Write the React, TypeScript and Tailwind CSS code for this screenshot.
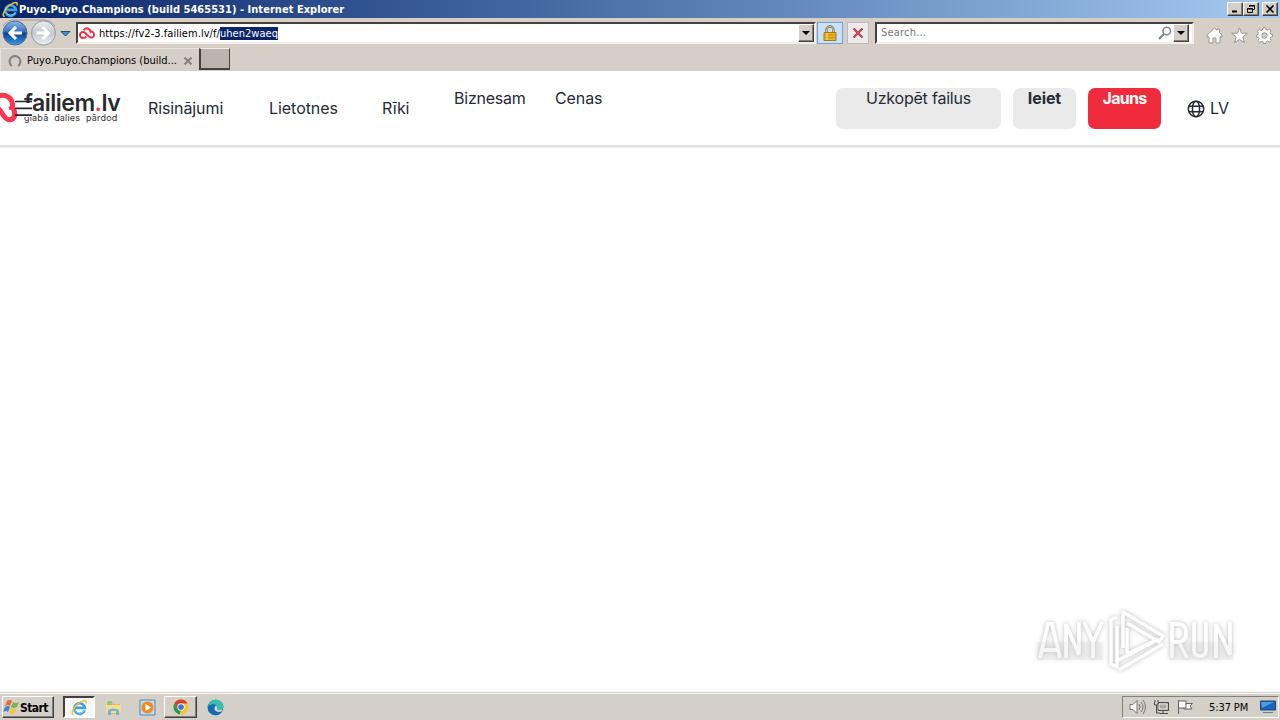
import type { ReactNode } from "react";

type LinkItem = { label: string; className: string };

const navLinks: LinkItem[] = [
  { label: "Risinājumi", className: "ml-[148px] w-[121px] pt-[27px] tracking-[-0.1px]" },
  { label: "Lietotnes", className: "w-[113px] pt-[27px] tracking-[-0.05px]" },
  { label: "Rīki", className: "w-[72px] pt-[27px] tracking-[-0.25px]" },
  { label: "Biznesam", className: "w-[101px] pt-[17px] tracking-[-0.22px]" },
  { label: "Cenas", className: "w-[60px] pt-[17px] tracking-[-0.1px]" }
];

const raised = "border border-t-white border-l-white border-r-[#404040] border-b-[#404040] bg-[#d4d0c8] shadow-[inset_-1px_-1px_0_#808080]";
const sunken = "border-2 border-t-[#45423d] border-l-[#45423d] border-r-[#f2efeb] border-b-[#f2efeb] bg-white";

function IeLogo({ size }: { size: number }) {
  return (
    <svg width={size} height={size} viewBox="0 0 18 18" fill="none">
      <path d="M14.5 12.1A5.7 5.7 0 1 1 14.8 9.4H5" stroke="#3fa2e4" strokeWidth="2.7" />
      <path d="M14.2 12A5.7 5.7 0 0 1 4 11.6" stroke="#83d8f7" strokeWidth="1" />
      <path d="M2.9 16.5C-.9 16 2.3 9.2 7.7 4.8 12.7.8 17.8.1 15.7 4.8" stroke="#f3c433" strokeWidth="1.6" />
    </svg>
  );
}

function DropButton() {
  return (
    <span className={`flex h-[18px] w-4 shrink-0 items-center justify-center ${raised}`}>
      <svg width="8" height="4" viewBox="0 0 8 4"><path d="M0 0h8L4 4Z" fill="#000" /></svg>
    </span>
  );
}

function WindowButton({ children }: { children: ReactNode }) {
  return (
    <button className={`flex h-[14px] w-4 items-center justify-center ${raised}`}>
      <svg width="10" height="10" viewBox="0 0 10 10" fill="none" stroke="#000">{children}</svg>
    </button>
  );
}

function TitleBar() {
  return (
    <div className="flex h-[18px] items-center bg-linear-to-r from-[#0a246a] to-[#a6caf0] pl-[2px] pr-[2px]">
      <IeLogo size={17} />
      <span className="flex-1 whitespace-nowrap pt-px font-[DejaVu_Sans_Condensed,DejaVu_Sans,sans-serif] text-[11px] font-bold leading-[17px] tracking-[0.035px] text-white">
        Puyo.Puyo.Champions (build 5465531) - Internet Explorer
      </span>
      <WindowButton><path d="M2 7.5h5" strokeWidth="2" /></WindowButton>
      <WindowButton><path d="M3.5 3V1.5h5v4H7M3 2h6M1.5 4.5h5v4h-5ZM1 5h6" /></WindowButton>
      <span className="w-[3px]" />
      <WindowButton><path d="m1.5 1.5 7 7m0-7-7 7" strokeWidth="1.6" /></WindowButton>
    </div>
  );
}

function Toolbar() {
  return (
    <div className="flex h-[30px] items-start bg-[#d5cfc8]">
      <svg className="shrink-0" width="76" height="30" viewBox="0 0 76 30" fill="none">
        <defs>
          <linearGradient id="back" x2="0" y2="1">
            <stop stopColor="#8fb7e8" /><stop offset=".45" stopColor="#3670bd" /><stop offset=".5" stopColor="#123f91" /><stop offset="1" stopColor="#369be5" />
          </linearGradient>
          <linearGradient id="forward" x2="0" y2="1">
            <stop stopColor="#edf0f2" /><stop offset=".5" stopColor="#c2c8ce" /><stop offset="1" stopColor="#edf2f5" />
          </linearGradient>
        </defs>
        <path d="M3 8Q8 1 15 2h28q8 0 12 6" stroke="#a09d99" />
        <circle cx="15" cy="15" r="12" fill="url(#back)" stroke="#506d99" />
        <circle cx="43.5" cy="15" r="12" fill="url(#forward)" stroke="#939aa2" />
        <path d="M22 15H10m6-6-6 6 6 6" stroke="white" strokeWidth="3" />
        <path d="M36.5 15h12m-6-6 6 6-6 6" stroke="white" strokeWidth="3" />
        <path d="M61 13.5h9L65.5 18Z" fill="#3298ce" stroke="#254b6e" />
      </svg>
      <div className={`mt-1 flex h-[22px] w-[740px] shrink-0 items-center ${sunken}`}>
        <svg className="ml-px" width="16" height="13" viewBox="0 0 16 13" fill="none" stroke="#ee344c" strokeWidth="2">
          <path d="M7.5 9.5Q6 11 4 11a3 3 0 1 1 1.5-5.6L10 9.5c2 2 5 1 5-1.6C15 5 13 4 11.5 5 11 1 6 0 4.7 3.4" />
        </svg>
        <span className="ml-[4px] flex-1 whitespace-nowrap pt-px font-[DejaVu_Sans_Condensed,DejaVu_Sans,sans-serif] text-[11px] leading-[14px] tracking-[0.05px] text-black">
          https://fv2-3.failiem.lv/f/<span className="inline-block h-[13px] bg-[#0a246a] leading-[13px] text-white">uhen2waeq</span>
        </span>
        <DropButton />
      </div>
      <span className="ml-px mt-1 flex h-[22px] w-[26px] shrink-0 items-center justify-center border border-[#72a2dc] bg-[#c9e1fb]">
        <svg width="14" height="17" viewBox="0 0 14 17" fill="none">
          <path d="M3.5 8V5a3.5 3.5 0 0 1 7 0v3" stroke="#857243" strokeWidth="2.4" />
          <path d="M3.5 8V5a3.5 3.5 0 0 1 7 0v3" stroke="#d4c38b" />
          <path d="M1 7.5h12v8H1Z" fill="#e8b52b" stroke="#a97811" />
          <path d="M1 10h12M1 12.7h12" stroke="#c98b10" />
          <path d="M4 8v7" stroke="#ffe27a" />
        </svg>
      </span>
      <span className="ml-1 mt-1 flex h-[22px] w-[22px] shrink-0 items-center justify-center border border-[#bdb9bb] bg-[#eeeaec]">
        <svg width="12" height="12" viewBox="0 0 12 12"><path d="m1.5 1.5 9 9m0-9-9 9" stroke="#8c4652" strokeWidth="2.2" /><path d="m2 2 8 8m0-8-8 8" stroke="#dc4552" strokeWidth="1.2" /></svg>
      </span>
      <div className={`ml-[6px] mt-1 flex h-[22px] w-[319px] shrink-0 items-center pr-[3px] ${sunken}`}>
        <span className="ml-[4px] flex-1 pt-px font-[DejaVu_Sans_Condensed,DejaVu_Sans,sans-serif] text-[11px] tracking-[0.2px] text-[#767676]">Search...</span>
        <svg className="mr-px" width="14" height="14" viewBox="0 0 14 14" fill="none" stroke="#85878c"><circle cx="8.7" cy="5" r="3.8" strokeWidth="1.5" /><path d="m6 8-5 5" strokeWidth="2.4" /></svg>
        <DropButton />
      </div>
      <div className="ml-[12px] flex h-[30px] items-center gap-[8px] pt-[4px]">
        <svg width="17" height="17" viewBox="0 0 17 17" fill="white" stroke="#98948f"><path d="m1 8 7.5-7L11 3.3V2h2.5v3.6L16 8v2h-2v6h-4v-5H7v5H3v-6H1Z" /></svg>
        <svg width="17" height="17" viewBox="0 0 17 17" fill="white" stroke="#98948f"><path d="m8.5.8 2 5.3 5.8.2-4.5 3.6 1.5 5.7-4.8-3.2-4.8 3.2 1.5-5.7L.7 6.3l5.8-.2Z" /></svg>
        <svg width="17" height="17" viewBox="0 0 17 17" fill="white" stroke="#98948f">
          <path d="m7 .8-.5 2-1.3.6-2-1-1.9 2 1.2 1.8-.5 1.3L.5 8v2l2 .5.6 1.3-1 1.9 1.7 1.6 1.9-1 1.3.5.5 1.7h2.3l.5-1.8 1.4-.6 1.8 1 1.7-1.7-1.1-1.8.5-1.3 2-.5V7.5l-2-.5-.5-1.3 1-1.9-1.8-1.6-1.8 1-1.3-.5-.6-1.9Z" />
          <circle cx="8.5" cy="8.5" r="2.7" fill="#d5cfc8" />
        </svg>
      </div>
    </div>
  );
}

function TabStrip() {
  return (
    <div className="flex h-[23px] bg-[#d5cfc8]">
      <div className="flex w-[199px] items-center border-t border-l border-[#e8e4e0] pl-[7px] pt-px">
        <svg width="14" height="14" viewBox="0 0 13 13" fill="none"><path d="M3.6 11a5 5 0 1 1 5.8 0" stroke="#858585" strokeWidth="2" /></svg>
        <span className="ml-[5px] w-[156px] whitespace-nowrap pt-px font-[DejaVu_Sans_Condensed,DejaVu_Sans,sans-serif] text-[11px] text-black">Puyo.Puyo.Champions (build...</span>
        <svg width="10" height="10" viewBox="0 0 10 10"><path d="m1.5 1.5 7 7m0-7-7 7" stroke="#85817d" strokeWidth="2" /></svg>
      </div>
      <span className="h-[22px] w-[31px] border-2 border-t border-t-[#f0ede9] border-l-[#45413e] border-r-[#45413e] border-b-[#45413e] border-r bg-[#bcb4af]" />
    </div>
  );
}

function SiteLogo() {
  return (
    <div className="absolute left-0 top-0 h-[74px] w-[130px] overflow-hidden">
      <svg className="absolute left-0 top-[20px]" width="20" height="34" viewBox="0 0 20 34" fill="none" stroke="#fa3650">
        <path d="M-3 5.5C6 2 13.5 7 12.5 16.5M-3 17C2 18 3 29 9.5 28.7C15 28.5 16 23 13.5 18" strokeWidth="5" />
        <path d="M9 17.5Q13 16 14.5 20L13 27" strokeWidth="3.5" />
      </svg>
      <span className="absolute left-[24px] top-[17px] whitespace-nowrap font-[Inter,sans-serif] text-[23px] font-semibold leading-[30px] tracking-[-0.5px] text-[#2b2b2b]">
        failiem<span className="text-[#f43e53]">.</span>lv
      </span>
      <span className="absolute left-[24px] top-[41px] whitespace-nowrap font-[Inter,sans-serif] text-[9px] leading-[12px] tracking-[0.2px] text-[#333] [word-spacing:3px]">glabā dalies pārdod</span>
      <span className="absolute left-[22px] top-[32px] h-[12px] w-[10px] bg-white" />
      <span className="absolute left-[22px] top-[41px] h-[5px] w-[10px] bg-white" />
      <svg className="absolute left-[15px] top-[29px]" width="18" height="17" viewBox="0 0 18 17"><path d="M0 1.5h17M0 8.3h17M0 15.1h17" stroke="#25272c" strokeWidth="1.7" /></svg>
    </div>
  );
}

function SiteHeader() {
  return (
    <header className="relative flex h-[76px] items-start border-b-2 border-[#e2e2e2] bg-white font-[Inter,sans-serif] text-[16px] leading-[21px] text-[#242b36] shadow-[0_1px_1px_#eeeeee]">
      <SiteLogo />
      {navLinks.map((link) => (
        <a key={link.label} className={`shrink-0 whitespace-nowrap ${link.className}`}>{link.label}</a>
      ))}
      <div className="ml-[221px] flex shrink-0 gap-3 pt-[17px] text-center">
        <a className="h-[41px] w-[165px] rounded-[7px] bg-[#eaeaea] tracking-[-0.2px]">Uzkopēt failus</a>
        <a className="h-[41px] w-[63px] rounded-[7px] bg-[#eaeaea] font-bold tracking-[-0.1px]">Ieiet</a>
        <a className="h-[41px] w-[73px] rounded-[7px] bg-[#ef2b3c] font-bold tracking-[-0.7px] text-white">Jauns</a>
      </div>
      <div className="ml-[26px] flex items-center gap-[5px] pt-[27px]">
        <svg width="18" height="18" viewBox="0 0 18 18" fill="none" stroke="#252a30" strokeWidth="1.5"><circle cx="9" cy="9" r="7.7" /><ellipse cx="9" cy="9" rx="3.6" ry="7.7" /><path d="M1.8 6.2h14.4M1.8 11.8h14.4" /></svg>
        <span>LV</span>
      </div>
    </header>
  );
}

function Watermark() {
  return (
    <svg className="absolute bottom-[18px] right-[40px] drop-shadow-[0_0_2px_#bbbbbb]" width="205" height="66" viewBox="0 0 205 66" fill="none">
      <g stroke="white" strokeWidth="3.8">
        <path d="m5 50 8-34h4l8 34M8 42h14M31 50V16l13 31V14M49 14l9 20v16M67 14l-9 20" />
        <path d="M137 50V16h6q8 0 8 9t-8 9h-6M144 34l8 16M159 14v28q0 6 6 6t6-6V14M181 50V16l14 31V14" />
      </g>
      <g stroke="white" strokeWidth="3.5" strokeLinejoin="round">
        <path d="M82 9 76 12v44l6 3V18M88 40V4l40 24-4 6-32-19M92 20v26M80 54l44-23M84 62l44-26M92 46l31-15" />
      </g>
      <path d="M2 34h66v18H2ZM134 34h64v18h-64Z" fill="#dddddd" opacity=".25" />
    </svg>
  );
}

function ChromeIcon() {
  return (
    <svg width="16" height="16" viewBox="0 0 18 18">
      <circle cx="9" cy="9" r="8.5" fill="#f7c52d" />
      <path d="M1.6 4.8A8.5 8.5 0 0 1 16.4 5H9L5 11Z" fill="#e33b2e" />
      <path d="m1.6 4.8 3.8 6.3 3.6 2L7.2 17.3A8.5 8.5 0 0 1 1.6 4.8Z" fill="#259c52" />
      <circle cx="9" cy="9" r="4.1" fill="white" /><circle cx="9" cy="9" r="3.2" fill="#3476d7" />
    </svg>
  );
}

function Taskbar() {
  return (
    <footer className="flex h-[28px] items-start border-t border-[#d4d0c8] bg-[#d4d0c8] pl-[2px] pt-[3px] shadow-[inset_0_1px_0_white]">
      <button className={`flex h-[22px] w-[52px] items-center ${raised}`}>
        <svg className="shrink-0" width="17" height="16" viewBox="0 0 17 16">
          <path d="M4 2q3-2 5 0L7 7Q5 5 2 7Z" fill="#ec6639" /><path d="M10 3q3 2 6 0l-2 5q-3 2-6 0Z" fill="#79b84c" />
          <path d="M2 8q3-2 5 0L5 13q-2-2-5 0Z" fill="#4387cc" /><path d="M8 9q3 2 6 0l-2 5q-3 2-6 0Z" fill="#f6c544" />
        </svg>
        <span className="pt-px font-[DejaVu_Sans_Condensed,DejaVu_Sans,sans-serif] text-[12px] font-bold leading-[18px] tracking-[-0.55px] text-black">Start</span>
      </button>
      <span className="ml-[9px] flex h-[22px] w-[32px] items-center justify-center border-2 border-t-[#404040] border-l-[#404040] border-r-white border-b-white bg-[#f7f6f4]"><IeLogo size={17} /></span>
      <span className="flex h-[22px] w-[36px] items-center justify-center">
        <svg width="17" height="17" viewBox="0 0 17 17">
          <path d="M2 3h5l1 2h7v10H2Z" fill="#dfb85b" /><path d="M3 2h4v8H3Z" fill="#8cc777" /><path d="M1 6h15v8H1Z" fill="#f5de94" />
          <path d="M3 16v-5q5-3 11 0v5h-3v-4H6v4Z" fill="#6bb6da" />
        </svg>
      </span>
      <span className="flex h-[22px] w-[32px] items-center justify-center">
        <svg width="17" height="17" viewBox="0 0 17 17"><path d="M1 1h15v15H1Z" fill="#bddcf2" stroke="#5284b7" /><circle cx="8.5" cy="8.5" r="6" fill="#f28b1d" /><path d="m6.5 5 5.5 3.5L6.5 12Z" fill="white" /></svg>
      </span>
      <span className={`ml-px flex h-[22px] w-[33px] items-center justify-center ${raised}`}><ChromeIcon /></span>
      <span className="flex h-[22px] w-[36px] items-center justify-center">
        <svg width="17" height="17" viewBox="0 0 18 18">
          <circle cx="9" cy="9" r="8.3" fill="#1676be" />
          <path d="M.8 8C2-1 17-2 17.3 8c.2 4-6 5-7 2.8 2-3-1.5-6-4.6-5Q2.5 6 .8 8Z" fill="#35bfac" />
          <path d="M.8 8Q5 4 9.5 7 6 9 8 12q3 4 8 1-3 5-8 4.2Q0 15 .8 8Z" fill="#126cb4" />
          <path d="M10.3 10.8Q12 9 9.5 7 7 9 8.3 12q3 3 7.7 1 1-2-.5-1.8-3 1-5.2-.4" fill="#d4d0c8" />
        </svg>
      </span>
      <div className="ml-auto mr-px flex h-[22px] w-[157px] items-center border border-t-[#808080] border-l-[#808080] border-r-white border-b-white pl-[6px]">
        <svg width="18" height="16" viewBox="0 0 18 16" fill="none" stroke="#76736f"><path d="M1 5.5h3l4-4v13l-4-4H1Z" fill="white" /><path d="M10 5q2 3 0 6m2-8q4 5 0 10m2-12q5 7 0 14" /></svg>
        <svg className="ml-[6px]" width="17" height="16" viewBox="0 0 17 16" fill="none" stroke="#4e4c49"><path d="M5 3.5h10.5v8H5Z" fill="#aaa7a2" /><path d="M7 14.5h8M10 12v2M1.5 3v3h4V3M2 1v2m3-2v2M3.5 6v8H7" stroke="#4e4c49" /><path d="M6 5h8v5H6Z" stroke="#e8e6e3" /></svg>
        <svg className="ml-[7px]" width="17" height="16" viewBox="0 0 17 16" fill="white" stroke="#64615e"><path d="M1.5 1v14M2 2h7v7H2M9 4.5h6.5L13 7l2 3H7V9" /></svg>
        <span className="ml-[15px] w-[51px] whitespace-nowrap pt-px font-[DejaVu_Sans_Condensed,DejaVu_Sans,sans-serif] text-[11px] leading-[18px] tracking-[-0.1px] text-black">5:37 PM</span>
        <svg width="16" height="14" viewBox="0 0 16 14"><path d="M.5 1h15v9H.5Z" fill="#1764c1" stroke="#24466e" /><path d="M1 2h13L2 8Z" fill="#4d9be5" /><path d="M3 12h10v1H3Z" fill="#6a7f96" /></svg>
      </div>
    </footer>
  );
}

export default function App() {
  return (
    <div className="flex h-[720px] w-[1280px] flex-col overflow-hidden bg-white">
      <TitleBar />
      <Toolbar />
      <TabStrip />
      <main className="relative flex-1 bg-white">
        <SiteHeader />
        <Watermark />
      </main>
      <Taskbar />
    </div>
  );
}
